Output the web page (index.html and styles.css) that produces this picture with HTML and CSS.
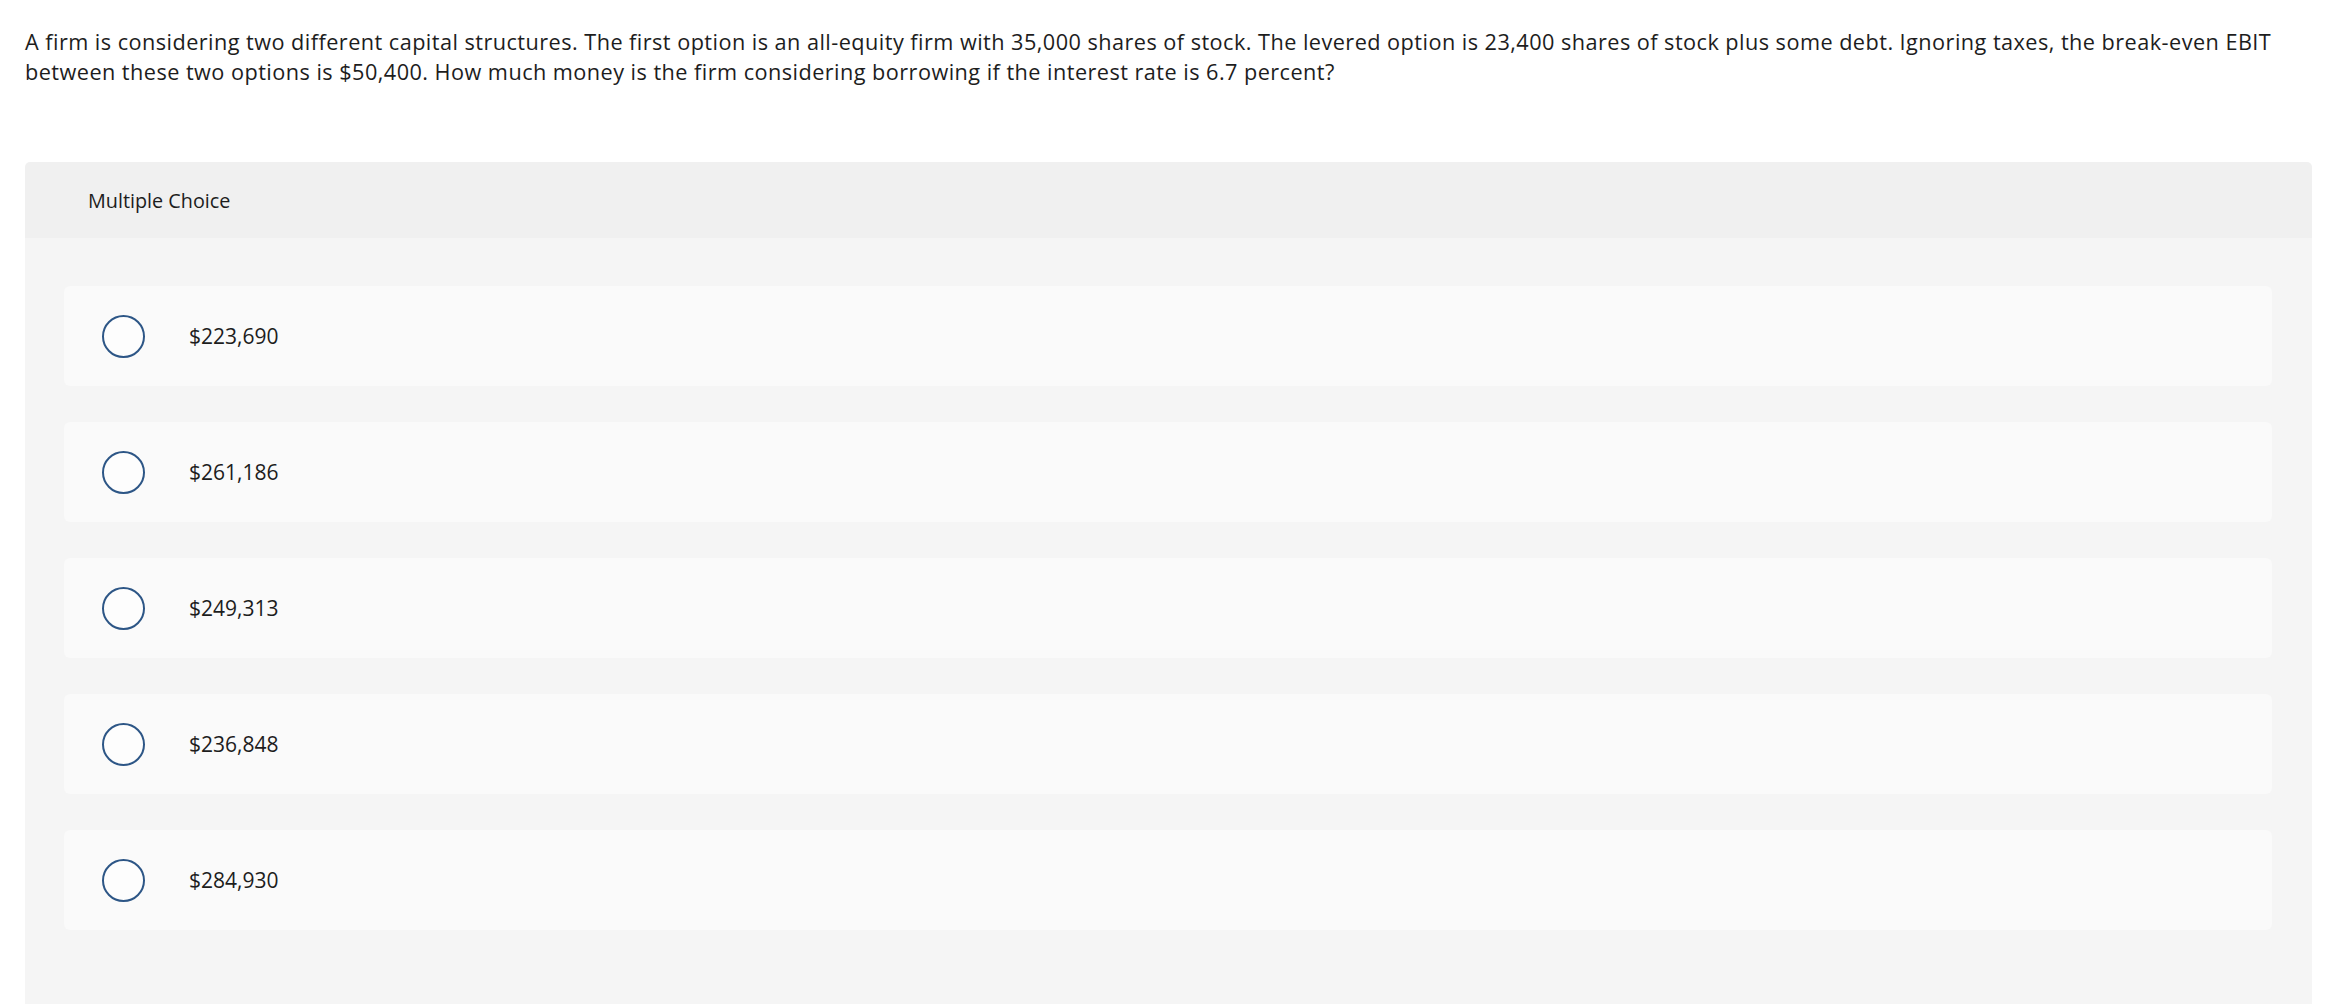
FILE: index.html
```html
<!DOCTYPE html>
<html>
<head>
<meta charset="utf-8">
<link rel="stylesheet" href="styles.css">
</head>
<body>
<div class="page">
  <p class="question">A firm is considering two different capital structures. The first option is an all-equity firm with 35,000 shares of stock. The levered option is 23,400 shares of stock plus some debt. Ignoring taxes, the break-even EBIT between these two options is $50,400. How much money is the firm considering borrowing if the interest rate is 6.7 percent?</p>
  <div class="panel">
    <div class="panel-head">Multiple Choice</div>
    <div class="panel-body">
      <div class="option"><span class="radio"></span><span class="label">$223,690</span></div>
      <div class="option"><span class="radio"></span><span class="label">$261,186</span></div>
      <div class="option"><span class="radio"></span><span class="label">$249,313</span></div>
      <div class="option"><span class="radio"></span><span class="label">$236,848</span></div>
      <div class="option"><span class="radio"></span><span class="label">$284,930</span></div>
    </div>
  </div>
</div>
</body>
</html>
```
FILE: styles.css
```css
html, body {
  margin: 0;
  padding: 0;
  background: #ffffff;
}
body {
  font-family: "Open Sans", Lato, sans-serif;
  color: #1d1d1d;
}
.page {
  padding: 27px 34px 0 25px;
}
.question {
  margin: 0;
  font-size: 21.7px;
  letter-spacing: 0.45px;
  line-height: 30px;
}
.panel {
  margin-top: 75px;
  width: 2287px;
  border-radius: 5px 5px 0 0;
  overflow: hidden;
}
.panel-head {
  background: #f0f0f0;
  height: 76px;
  display: flex;
  align-items: center;
  padding-left: 63px;
  font-size: 19.8px;
}
.panel-body {
  background: #f5f5f5;
  padding: 48px 40px 120px 39px;
  display: flex;
  flex-direction: column;
  gap: 36px;
}
.option {
  background: #fafafa;
  height: 100px;
  border-radius: 6px;
  display: flex;
  align-items: center;
  padding-left: 38px;
}
.radio {
  width: 39px;
  height: 39px;
  border: 2px solid #2d5686;
  border-radius: 50%;
  background: #fdfdfd;
  flex: none;
}
.label {
  margin-left: 44px;
  font-size: 21px;
}
```
